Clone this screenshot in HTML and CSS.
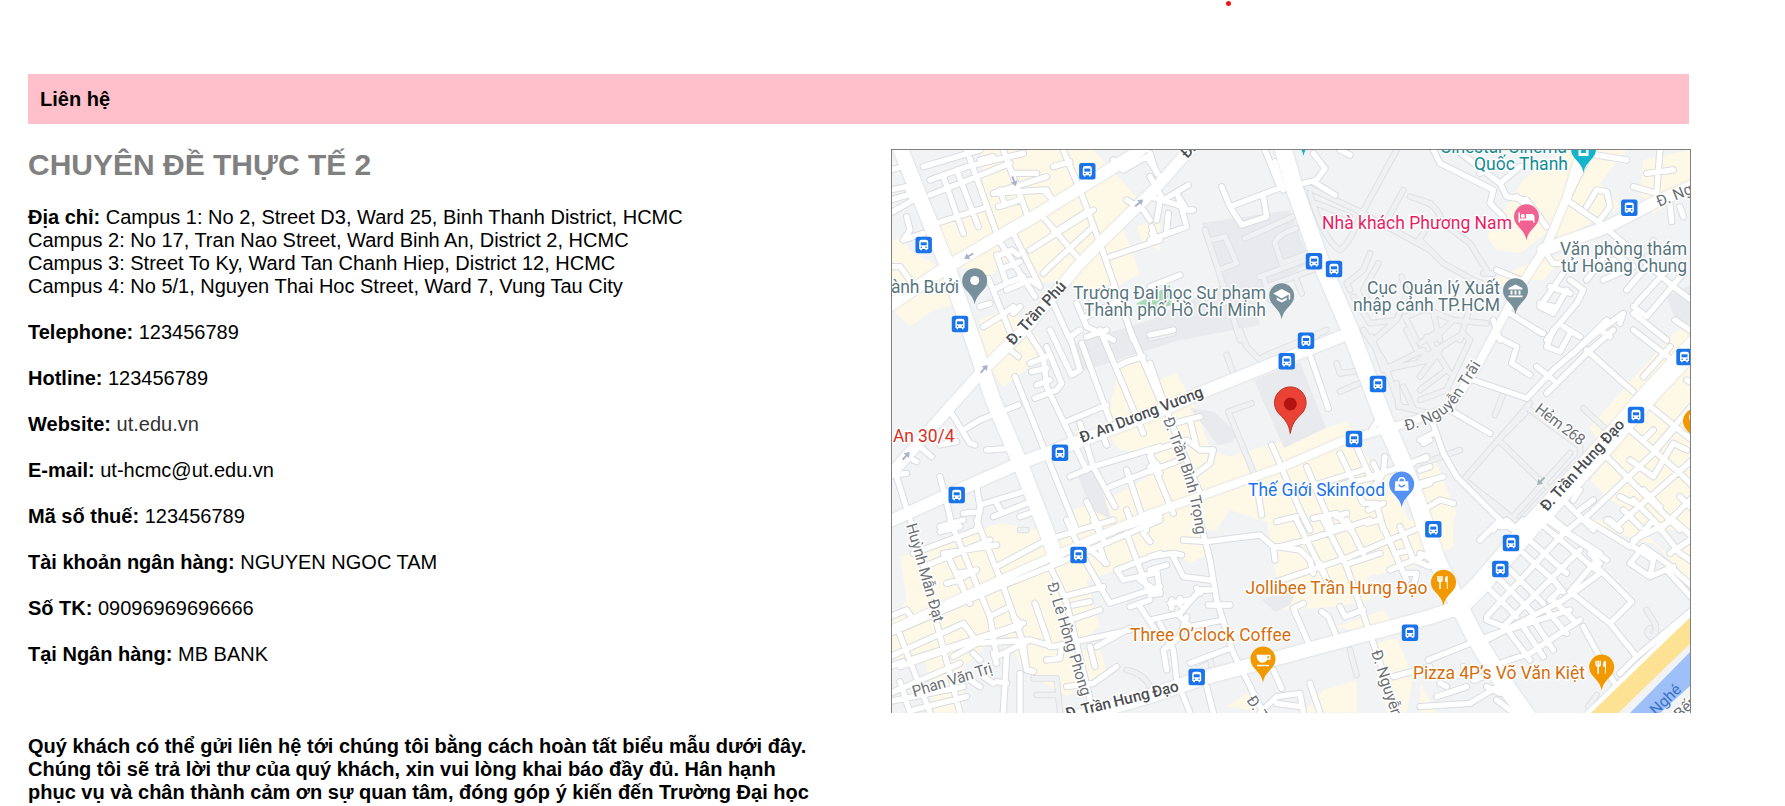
FILE: index.html
```html
<!DOCTYPE html>
<html lang="vi">
<head>
<meta charset="utf-8">
<title>Liên hệ</title>
<link rel="stylesheet" href="styles.css">
</head>
<body>
<header class="top"><span class="dot"></span></header>
<main class="page">
<h3 class="bar">Liên hệ</h3>
<div class="cols">
<section class="info">
<h2 class="title">CHUYÊN ĐỀ THỰC TẾ 2</h2>
<p><b>Địa chỉ:</b> Campus 1: No 2, Street D3, Ward 25, Binh Thanh District, HCMC<br>Campus 2: No 17, Tran Nao Street, Ward Binh An, District 2, HCMC<br>Campus 3: Street To Ky, Ward Tan Chanh Hiep, District 12, HCMC<br>Campus 4: No 5/1, Nguyen Thai Hoc Street, Ward 7, Vung Tau City</p>
<p><b>Telephone:</b> 123456789</p>
<p><b>Hotline:</b> 123456789</p>
<p><b>Website:</b> <a class="link">ut.edu.vn</a></p>
<p><b>E-mail:</b> ut-hcmc@ut.edu.vn</p>
<p><b>Mã số thuế:</b> 123456789</p>
<p><b>Tài khoản ngân hàng:</b> NGUYEN NGOC TAM</p>
<p><b>Số TK:</b> 09096969696666</p>
<p><b>Tại Ngân hàng:</b> MB BANK</p>
<p class="note">Quý khách có thể gửi liên hệ tới chúng tôi bằng cách hoàn tất biểu mẫu dưới đây.<br>Chúng tôi sẽ trả lời thư của quý khách, xin vui lòng khai báo đầy đủ. Hân hạnh<br>phục vụ và chân thành cảm ơn sự quan tâm, đóng góp ý kiến đến Trường Đại học</p>
</section>
<div class="map">
<svg viewBox="892 150 798 563" width="798" height="563">
<defs>
<path id="pin" d="M0 24C-1.200 17-5 13.500-9 9A12.500 12.500 0 1 1 9 9C5 13.500 1.200 17 0 24Z"/>
<g id="bus"><rect x="-8.200" y="-8.200" width="16.400" height="16.400" rx="2.500" fill="#1a73e8"/><path d="M-4.500 4V-3Q-4.500-5.300-2-5.300H2Q4.500-5.300 4.500-3V4H3.500V5.300H1.800V4H-1.800V5.300H-3.500V4Z" fill="#fff"/><path d="M-3-2.700H3V.3H-3Z" fill="#1a73e8"/><circle cx="-2.400" cy="2.200" r=".8" fill="#1a73e8"/><circle cx="2.400" cy="2.200" r=".8" fill="#1a73e8"/></g>
<g id="fork" fill="none" stroke="#fff" stroke-width="1.500"><path d="M-5.500-6V-2.500Q-5.500-.5-3.500-.5Q-1.500-.5-1.500-2.500V-6M-3.500-6V7"/><path d="M3.300 7V0H1.500V-3Q1.500-6 4.200-6V7Z" fill="#fff" stroke="none"/></g>
<path id="arrow" d="M-5-1H.5V-3.500L5.500 0L.5 3.500V1H-5Z"/>
<g id="paths">
<g transform="translate(1150 140) scale(.3333)">
<path d="M165 270L205 390L270 600M185 300L225 290L260 370L205 390M285 295L440 225M375 310L395 370L500 330M375 310Q380 285 440 265M330 410L490 350M340 410L360 480M350 440L500 385M440 420L455 460M480 160Q520 300 570 330Q600 310 630 230L740 30M470 140L620 210L840 330M500 190L600 230M660 340L640 390L590 430L600 450M685 370L640 450L650 470M755 410L770 460L740 540L660 550L610 470M770 530L840 500M740 540L670 600M760 150L700 260M780 170L840 190M800 310L840 250M765 530L800 600M0 595L70 580"/></g>
<g transform="translate(1420 140) scale(.3333)">
<path d="M0 180Q50 190 70 250L150 310L200 390M0 300L70 370L160 420L210 440M0 500L100 540L200 550M40 520L60 600M100 540L40 600M150 500L120 600M190 400L220 400M620 400L700 300"/></g>
<g transform="translate(1150 330) scale(.3333)">
<path d="M270 0L290 50L330 90L500 20M230 75L250 130M305 220L235 245L320 450M340 80L530 0M560 100L570 130L640 120M570 185L640 155M640 0L700 90L750 230L840 250M665 20L700 120L820 60M700 120L840 90M740 160L745 230L790 235L760 170M770 0L800 60L840 80M700 115L750 100"/></g>
<g transform="translate(1420 330) scale(.3333)">
<path d="M0 40L60 0M0 90L130 10L150 30L80 180M20 20L90 130M0 180L80 120M0 210L80 180M60 60L0 140M330 220L130 450L285 590L480 380L480 350L330 240M235 330L380 470M315 250L235 330M250 190L225 255M490 235L560 300M10 400L120 360M140 455L285 570M450 370L280 560"/></g>
<g transform="translate(880 520) scale(.3333)"><path d="M460 475H530L540 578M470 525H530M740 450Q790 460 810 500M440 30L420 30"/></g>
<g transform="translate(1150 520) scale(.3333)"><path d="M600 390L620 465M140 430L180 410L185 440"/></g>
<g transform="translate(1420 520) scale(.3333)"><path d="M680 270L705 310Q715 350 690 350Q675 335 690 325M505 560L530 525"/></g>
</g>
<g id="roads">
<g transform="translate(880 140) scale(.3333)">
<path d="M30 90L90 75M130 80L300 30M150 120L260 80L430 40M150 165L290 110L390 70M170 250L310 205M190 110L250 280M230 90L295 260M260 30L350 280M370 30L440 220M300 60L340 50M400 100L470 100M340 160L500 110M360 150L375 195L355 200L420 180M500 150L510 170M340 160L490 150L520 180M550 30L600 150L660 310L760 600M520 80L570 65M480 220L600 360M400 280L480 440M350 290L465 470M360 345L395 330L415 345M350 345L380 430L340 450M370 385L420 365M380 430L430 410M325 415L400 600M380 450L450 420L480 440M450 330L640 210M490 400L510 380L640 260M520 280L620 215M690 350L840 300M700 60L730 90L800 50L840 110M740 180L790 210L810 240M815 260L825 290M30 150L80 140L100 180L30 220M80 230L90 270L70 300L130 280M30 380L60 380L90 420M300 500L330 490M310 560L360 530L400 500M400 520L420 500M520 490L570 600M590 490L620 560L700 600M620 530L720 480L760 600M620 500L700 440M30 180L100 160"/></g>
<g transform="translate(1150 140) scale(.3333)">
<path d="M0 110L40 180L115 135M80 160L110 210L130 210M30 185L20 240M0 170L100 200M0 300L110 260L85 170M55 220L50 270M0 440L90 405M215 140L240 200L400 140M240 200L275 255L350 230L340 170M345 30L385 130M375 65L400 150M460 130L500 120L525 85L490 40M490 125L555 165M570 30L600 45M0 40L20 100M5 280L15 300"/></g>
<g transform="translate(1420 140) scale(.3333)">
<path d="M40 30L60 70L220 150L210 190L250 230M110 30L240 130L300 80M180 100L220 70M240 130L260 170L320 180L380 260M290 170L360 230M440 180L540 250L600 300L760 440L840 500M480 70L500 40L620 60M500 200L530 150L560 155L570 200L540 240M640 140L710 160L720 30M680 100L760 90M750 190L755 245M780 200L790 230M450 160L500 60M370 330L400 370L450 370L360 500L400 520L440 450M390 440L450 460M400 500L360 490M450 420L490 450L470 490L410 560L380 600M500 420L570 330L640 380L550 420M580 360L600 380M680 380L620 450M750 380L650 490M790 400L680 530L640 500M600 550L610 520L500 600M270 520L365 580M230 390L300 420M430 560L480 590M560 540L500 600M640 520L740 600M765 540L840 590M220 540L240 600"/></g>
<g transform="translate(880 330) scale(.3333)">
<path d="M390 60L415 80M405 140L590 600M440 0L490 80L500 170L620 420M530 180L545 160L500 50M450 100L500 80M455 125L500 115M470 165L510 150M465 205L530 180M510 0L575 135L600 120L570 20L600 0M605 40L690 270M560 275L680 225M660 0L790 310M720 105L740 95L790 80M750 0L840 210M620 20L680 0M250 300L300 270L415 225M215 250L270 340L285 345M320 360L390 355M180 345L230 335M100 390L110 395M120 350L155 380M40 435L80 430M50 440L100 600M180 440L220 600M290 470L300 530L290 600M250 550L300 545L300 525L430 485M340 560L440 520M350 520L365 545M180 590L250 570M600 280L640 410L840 350M570 440L640 410L705 530M690 470L840 410M740 420L800 600M810 370L840 430M620 515L660 600M740 540L755 580M670 320L680 345M710 600L840 560M420 560L450 550"/></g>
<g transform="translate(1150 330) scale(.3333)">
<path d="M0 100L60 270L150 490M70 280L150 260M0 365L110 330L150 360L190 360L180 400L140 430M120 270L140 350M0 425L90 390M0 380L70 550M20 400L0 410M365 345L450 540L480 600M475 60L535 235M470 410L550 600M480 470L640 420M500 480L680 440M570 370L640 520L680 520L700 600M620 350L660 440L790 400M705 380L700 430L660 490M670 400L690 440M320 460L335 555M380 575L440 560M490 565L560 550L600 600M560 560L590 550M665 300L690 260M655 540L700 520M650 580L690 570M780 400L830 380M780 480L840 460M820 340L840 330M0 15L70 0"/></g>
<g transform="translate(1420 330) scale(.3333)">
<path d="M160 150L320 205M220 15L290 50L275 100L330 135M90 240L210 310M0 330L40 310M35 270L70 370L110 440L240 570L280 600M320 205L400 120L540 0M380 190L500 70L580 0M350 110L400 150M380 50L400 0M380 50L420 65L450 10M500 60L640 185M460 70L500 30M540 0L570 20M640 0L770 100M680 220L840 350M620 290L780 430L840 490M560 380L780 600M700 360L840 200M520 400L560 380M500 560L700 370L760 300M600 580L840 370M720 600L840 480M630 390L700 440L760 340L800 360M670 330L700 300M600 500L640 520M570 570L600 600M610 540L660 590M640 510L690 560M670 480L720 530M670 140L750 50M430 510L520 600M480 540L520 510M460 510L480 480M390 560L440 600M350 0L370 10M0 390L20 385M0 420L30 410M0 460L70 440M10 540L60 510L100 520M220 600L240 570M800 150L840 170M780 500L840 560"/></g>
<g transform="translate(880 520) scale(.3333)">
<path d="M210 0L330 290L350 410M100 100L290 30M130 140L330 60M180 35L240 20M200 100L270 250M190 100L350 75M250 170L290 150L230 160M200 190L240 180L260 230M290 0L370 200L430 370L440 450M350 140L500 60L700 0M30 340L360 200L510 140L840 0M30 290L80 270L100 300M30 410L250 310L280 350M50 320L150 578M90 420L430 310M60 440L230 380L430 310M30 520L240 430M170 310L240 578M330 290L380 265M350 410L450 360L520 380L750 330M380 400L370 578M420 360L440 450L460 455M420 460L420 578M220 410L290 370L450 360M330 350L420 320M400 290L420 310M280 400L300 420M340 400L350 430M510 140L540 200L560 250L640 578M465 250L510 380M550 230L670 200M580 255L630 245M570 300L660 270M560 0L620 130L690 250L840 200M620 80L680 130M660 80L675 130M640 0L670 60M740 40L800 200M790 40L810 65M710 150L840 100M710 150L730 180L820 160M750 260L810 240M780 260L840 350M630 380L645 440M560 500L640 490L710 440M500 420L540 415L545 380M650 380L750 325M780 180L840 220M270 480L300 500M310 470L340 490M350 485L380 490M60 485L90 578M0 550L250 500M100 570L260 530M30 440L70 425"/></g>
<g transform="translate(1150 520) scale(.3333)">
<path d="M150 0L180 120L200 240L250 400L340 578M100 60L170 65L330 45L370 80L375 120M370 85L470 60L660 0M380 80L450 90L480 120L490 160M380 185L600 110L840 10M440 0L540 200M520 0L590 140L660 340L740 578M590 0L640 100M690 0L770 180M750 20L790 120L840 140M720 150L840 100M740 100L780 90M600 130L690 100M510 130L540 200M560 20L600 20M0 110L70 100L95 105M70 110L100 170L180 180M0 150L50 135M20 150L30 220L0 225M0 300L90 280L150 210L180 210M60 250L120 240M65 240V265M90 235V255M140 205L150 220M90 290L120 320L220 300M30 310L70 390L80 480L120 578M110 290L90 350L40 390L50 450M175 255L240 255M120 430L240 385M430 265L460 250M430 265L480 380M515 275L535 290L560 350M570 260L585 290L640 270M370 450L395 505M170 500L190 578M480 490L510 578M330 578L380 530L450 520L460 578M380 550L450 560M730 470L840 440M770 160L800 160L790 200"/></g>
<g transform="translate(1420 520) scale(.3333)">
<path d="M0 100L40 120M180 60L240 0M260 0L440 160M240 20L290 20L310 0M310 100L400 180L430 215M200 290L430 40L480 0M210 210L290 290M200 300L250 320L480 90M240 180L340 280M270 150L370 250M350 0L540 160L430 240M380 0L560 120M430 30L540 100M500 0L630 80L700 0M560 0L600 30M200 360L430 240M25 420L200 350L450 270M240 430L330 400L480 300M270 340L330 420M310 320L370 410M340 300L400 390M380 270L440 340M400 240L460 300M420 210L390 240M530 120L450 215L570 310L635 245L530 140M570 310L650 410L840 250M490 320L560 450L590 500M640 80L700 120L690 170L630 130L670 80L740 130L840 220M690 170L760 140M700 0L780 100L840 140M640 60L760 0M750 100L840 40M760 0L840 70M740 150L840 260M160 480L220 460M60 490L80 500M0 560L150 550L250 490M50 530L140 500M230 540L280 578M130 440L170 480M200 500L240 520M650 410L600 460M510 100L540 130"/></g>
</g>
<g id="avenues">
<path stroke-width="11" d="M892 473L950 407L987 366L1027 327L1077 267L1100 243L1155 189L1196 142"/>
<path stroke-width="15" d="M899 145L923 205L947 265L973 340L993 400L1020 463L1046 530L1056 558"/>
<path stroke-width="12" d="M880 312L947 267L1040 213L1130 157L1148 144"/>
<path stroke-width="12" d="M886 523L950 494L1020 463L1080 441L1160 411L1205 391L1277 362L1350 333"/>
<path stroke-width="17" d="M1282 145L1295 190L1320 260L1350 330L1383 417L1403 463L1420 510L1437 560L1457 602L1475 637L1498 675L1530 720"/>
<path stroke-width="14" d="M1060 722L1150 696L1203 678L1307 650L1430 617L1457 608"/>
<path stroke-width="20" d="M1457 608L1480 585L1530 527L1555 500L1607 443L1650 393L1700 340"/>
<path stroke-width="8" d="M1584 140L1567 197L1547 245L1515 295L1478 365L1450 408L1400 425L1340 442L1280 468L1150 514L1000 580L880 635"/>
<path stroke-width="12" d="M1543 250L1607 227L1653 203L1700 183"/>
<path stroke-width="7" d="M1580 722L1700 607"/>
</g>
</defs>
<g class="built" transform="translate(880 140) scale(.3333)"><path d="M300 30H640L770 170L720 240L780 400L650 470L560 420L470 430L390 270L220 370L170 260L320 210ZM30 360L100 340L200 390L250 490L160 510L90 560L30 500ZM240 380L340 310L390 350L330 410ZM300 540L390 500L480 600L300 600ZM770 260L840 230V330L790 310ZM30 310L60 290L100 340L30 360ZM430 290L540 240L640 370L560 430L480 410Z"/></g>
<g class="built" transform="translate(1420 140) scale(.3333)"><path d="M310 120L430 30H620L540 130L600 200L420 300L390 270L300 340L230 330L200 290L270 180ZM670 60L810 30V160L700 220L660 160ZM220 420L370 350L430 350L370 420L300 420L260 450ZM0 215L30 240L0 280Z"/></g>
<g class="built" transform="translate(880 330) scale(.3333)"><path d="M300 0H440L500 70L370 170L330 120ZM720 110L780 90L840 230V370L720 360L670 300ZM580 540L700 500L840 420V600H590Z"/></g>
<g class="built" transform="translate(1150 330) scale(.3333)"><path d="M0 160L80 130L140 240L180 360L240 380L590 275L650 380L720 440L790 600H440L330 570L240 540L200 600H0Z"/></g>
<g class="built" transform="translate(1420 330) scale(.3333)"><path d="M510 290L770 0H810V400L640 550L560 500L510 450L560 390ZM0 380L50 400L110 550L90 600H0ZM600 600L810 390V600Z"/></g>
<g class="built" transform="translate(880 520) scale(.3333)"><path d="M60 110L360 10L540 40L700 0H840V110L620 180L660 320L560 390L660 390L680 450L560 530L430 450L370 330L250 440L250 578H160L140 430L30 410V320L80 240Z"/></g>
<g class="built" transform="translate(1150 520) scale(.3333)"><path d="M0 0H160L180 100L120 130L60 90L0 90ZM350 0H810L840 130L650 170L660 240L560 260L400 270L370 130ZM560 320L700 270L730 310L660 340ZM680 370L740 355L790 470L770 578H710ZM230 560L290 520L350 578ZM520 510L620 480V578H460Z"/></g>
<g class="built" transform="translate(1420 520) scale(.3333)"><path d="M0 0H100V80L0 130ZM500 0H630L740 100L810 50V180L700 70L650 60ZM0 490L50 578H0Z"/></g>
<g class="campus"><path d="M1202 223L1290 210L1310 262L1255 300L1260 325L1180 340L1080 372L1070 345L1150 320L1222 285ZM1254 380L1300 362L1326 428L1284 448L1262 399ZM1190 408L1215 412L1238 435L1232 442L1218 445ZM1078 477L1095 470L1112 520L1092 510ZM1666 297L1690 285V325L1675 317ZM1262 600L1300 585L1290 605L1275 612Z"/></g>
<path fill="#a8dab5" d="M1136 304L1170 285L1172 305L1150 311Z"/>
<g class="lines p"><use href="#paths" class="case"/><use href="#paths" class="face"/></g>
<g class="lines r"><use href="#roads" class="case"/></g>
<use href="#avenues" class="avenue-case"/>
<g class="lines r"><use href="#roads" class="face"/></g>
<use href="#avenues" class="avenue"/>
<path d="M1590 727L1700 621" stroke="#fde293" stroke-width="19"/>
<path d="M1630 713L1690 652V686L1660 713Z" fill="#9dc0f9"/>
<g fill="#abb0cf">
<use href="#arrow" transform="translate(1014 181) rotate(70)"/><use href="#arrow" transform="translate(1139 203) rotate(-40)"/><use href="#arrow" transform="translate(969 256) rotate(150)"/><use href="#arrow" transform="translate(984 369) rotate(-48)"/><use href="#arrow" transform="translate(906 456) rotate(-48)"/><use href="#arrow" transform="translate(1541 481) rotate(135)" fill="#a3b3b8"/>
</g>
<g class="street">
<text class="dark" transform="translate(1013 346) rotate(-47.500)" textLength="80">Đ. Trần Phú</text>
<text class="dark" transform="translate(1082 443) rotate(-21)" textLength="131">Đ. An Dương Vương</text>
<text class="dark" transform="translate(1187 159) rotate(-45)">Đ.</text>
<path id="tbt" fill="none" d="M1163 419C1175 455 1190 480 1197 541"/>
<text><textPath href="#tbt" textLength="121">Đ. Trần Bình Trọng</textPath></text>
<text transform="translate(906 525) rotate(74)" textLength="102">Huỳnh Mẫn Đạt</text>
<text transform="translate(914 697) rotate(-17)" textLength="83">Phan Văn Trị</text>
<text transform="translate(1047 584) rotate(73)" textLength="118">Đ. Lê Hồng Phong</text>
<text class="dark" transform="translate(1067 719) rotate(-14)" textLength="116">Đ. Trần Hưng Đạo</text>
<text transform="translate(1371 652) rotate(72)">Đ. Nguyễn</text>
<text transform="translate(1246 700) rotate(57)">Đ. Trần</text>
<path id="nt" fill="none" d="M1406 431Q1446 421 1460 398L1484 360"/>
<text><textPath href="#nt" textLength="104">Đ. Nguyễn Trãi</textPath></text>
<text transform="translate(1534 411) rotate(37)" textLength="58">Hẻm 268</text>
<text class="dark" transform="translate(1547 512) rotate(-48)" textLength="117">Đ. Trần Hưng Đạo</text>
<text transform="translate(1659 207) rotate(-22)">Đ. Nguyễn</text>
<text class="canal" transform="translate(1656 716) rotate(-44)">Nghé</text>
<text transform="translate(1680 720) rotate(-44)">Bến</text>
</g>
<g class="place">
<text x="891" y="292.500" textLength="68" fill="#587680">ành Bưởi</text>
<g fill="#587680"><text x="1073" y="299" textLength="193">Trường Đại học Sư phạm</text><text x="1084" y="316" textLength="182">Thành phố Hồ Chí Minh</text>
<text x="1367" y="294" textLength="133">Cục Quản lý Xuất</text><text x="1353" y="311" textLength="147">nhập cảnh TP.HCM</text>
<text x="1560" y="254.500" textLength="127">Văn phòng thám</text><text x="1561" y="272" textLength="126">tử Hoàng Chung</text></g>
<text x="1322" y="228.700" textLength="190" fill="#e91e63">Nhà khách Phương Nam</text>
<g fill="#128c94"><text x="1440" y="152.500" textLength="127">Cinestar Cinema</text><text x="1474" y="170" textLength="94">Quốc Thanh</text></g>
<text x="893" y="442" textLength="61.500" fill="#d93025">An 30/4</text>
<text x="1248" y="496" textLength="137" fill="#1a73e8">Thế Giới Skinfood</text>
<g fill="#d56e0c"><text x="1245.500" y="594" textLength="182">Jollibee Trần Hưng Đạo</text><text x="1130" y="641" textLength="161">Three O’clock Coffee</text><text x="1413" y="679" textLength="172">Pizza 4P’s Võ Văn Kiệt</text></g>
</g>
<g><use href="#bus" x="1087.300" y="171.300"/><use href="#bus" x="923.700" y="245"/><use href="#bus" x="960" y="324"/><use href="#bus" x="1314" y="261.300"/><use href="#bus" x="1334" y="269"/><use href="#bus" x="1306" y="340.700"/><use href="#bus" x="1286.700" y="361.300"/><use href="#bus" x="1378" y="384"/><use href="#bus" x="1354" y="439"/><use href="#bus" x="1060" y="452.700"/><use href="#bus" x="956.700" y="495"/><use href="#bus" x="1629.300" y="207.700"/><use href="#bus" x="1636" y="415"/><use href="#bus" x="1684.500" y="357"/><use href="#bus" x="1433.300" y="529.300"/><use href="#bus" x="1511" y="543"/><use href="#bus" x="1500.300" y="569"/><use href="#bus" x="1410" y="632.700"/><use href="#bus" x="1196.700" y="677"/><use href="#bus" x="1078.500" y="555"/></g>
<g transform="translate(974.700 280.500)"><use href="#pin" fill="#78909c"/><circle r="4.500" fill="#fff"/></g>
<g transform="translate(1281.700 295.500)"><use href="#pin" fill="#78909c"/><path d="M-8.500-2L0-6.500L8.500-2V4H7V-1L0 3ZM-5 2L0 4.700L5 2V4.500L0 7L-5 4.500Z" fill="#fff"/></g>
<g transform="translate(1515.500 290.500)"><use href="#pin" fill="#78909c"/><path d="M-7-2.500L0-6L7-2.500V-1H-7ZM-5 0H-3V4H-5ZM-1 0H1V4H-1ZM3 0H5V4H3ZM-7 5H7V6.800H-7Z" fill="#fff"/></g>
<g transform="translate(1526.500 216.500)"><use href="#pin" fill="#f06292"/><path d="M-8-4H-6.500V2H-.5V-2.500H5Q8-2.500 8 .5V6H6.500V4H-6.500V6H-8Z" fill="#fff"/><circle cx="-3.700" cy="-.5" r="2" fill="#fff"/></g>
<g transform="translate(1583.500 149)"><use href="#pin" fill="#12b5cb"/><path d="M-5-3H5V7H-5Z" fill="#fff"/><path d="M-2.500 0H2.500V4H-2.500Z" fill="#12b5cb"/></g>
<use href="#pin" x="1303.500" y="132" fill="#12b5cb"/>
<g transform="translate(1401.700 483.700)"><use href="#pin" fill="#5491f5"/><path d="M-6.500-2.500H6.500L7 7H-7Z" fill="#fff"/><path d="M-3-2V-3Q-3-6 0-6T3-3V-2" fill="none" stroke="#fff" stroke-width="1.500"/><path d="M-3 1Q0 5 3 1" fill="none" stroke="#5491f5" stroke-width="1.500"/></g>
<g transform="translate(1443.500 582)"><use href="#pin" fill="#f29900"/><use href="#fork"/></g>
<g transform="translate(1263 658.700)"><use href="#pin" fill="#f29900"/><path d="M-6.500-4H7.500V1H4Q3 4-1 4Q-6.500 3-6.500-4ZM-6 6H6V7.500H-6Z" fill="#fff"/><path d="M4.300-2.500H6V-.5H4.300Z" fill="#f29900"/></g>
<g transform="translate(1601.700 666.700)"><use href="#pin" fill="#f29900"/><use href="#fork"/></g>
<g transform="translate(1695.500 420.700)"><use href="#pin" fill="#f29900"/><use href="#fork"/></g>
<g transform="translate(1290.300 404)"><path d="M0 29.500C-1.500 20-5 16-10.500 10.500A15.800 15.800 0 1 1 10.500 10.500C5 16 1.500 20 0 29.500Z" fill="#ea4335" stroke="#b93224"/><circle r="6.500" fill="#b31412"/></g>
</svg>
</div>
</div>
</main>
</body>
</html>
```
FILE: styles.css
```css
body {
  margin: 0;
  height: 806px;
  overflow: hidden;
  background: #fff;
  color: #000;
  font: 20px/23px "Liberation Sans", Arial, sans-serif;
}
.top {
  height: 74px;
  display: flex;
  justify-content: flex-start;
  padding-left: 1226px;
  box-sizing: border-box;
}
.dot {
  width: 5px;
  height: 5px;
  margin-top: 1px;
  border-radius: 50%;
  background: #f11414;
}
.page {
  width: 1661px;
  margin-left: 28px;
}
.bar {
  box-sizing: border-box;
  height: 50px;
  margin: 0 0 25px;
  padding: 14px 12px 13px;
  background: pink;
  font-size: 20px;
}
.cols {
  display: flex;
}
.info {
  flex: 0 0 863px;
  white-space: nowrap;
}
.title {
  margin: 0 0 25px;
  font-size: 30px;
  line-height: 32px;
  color: gray;
}
.info p {
  margin: 0 0 23px;
}
.info .note {
  margin-top: 69px;
  font-weight: bold;
}
.link {
  color: #333;
}
.map {
  flex: none;
  width: 798px;
  height: 563px;
  border: 1px solid gray;
  border-bottom: 0;
  background: #f1f3f4;
}
.map svg {
  display: block;
}
.built {
  fill: #fef8e7;
}
.campus {
  fill: #e8eaed;
}
.lines,
.avenue,
.avenue-case {
  fill: none;
  stroke-linecap: round;
  stroke-linejoin: round;
}
.case {
  stroke: #dadce0;
  stroke-width: 22px;
}
.face {
  stroke: #fff;
  stroke-width: 16px;
}
.p .case {
  stroke: #dfe1e5;
  stroke-width: 20px;
}
.p .face {
  stroke: #eff1f3;
  stroke-width: 14px;
}
.avenue {
  stroke: #fff;
}
.avenue-case {
  stroke: #dadce0;
  filter: drop-shadow(0 0 1px #d0d3d8);
}
.street,
.place {
  font-family: Roboto, sans-serif;
  stroke: #fff;
  stroke-width: 3px;
  stroke-linejoin: round;
  paint-order: stroke;
}
.street path {
  stroke: none;
}
.street {
  font-size: 15.5px;
  fill: #6b7075;
}
.street .dark {
  fill: #4a4d51;
  font-weight: 500;
}
.street .canal {
  fill: #3872c8;
  stroke: none;
}
.place {
  font-size: 17.5px;
}
```
